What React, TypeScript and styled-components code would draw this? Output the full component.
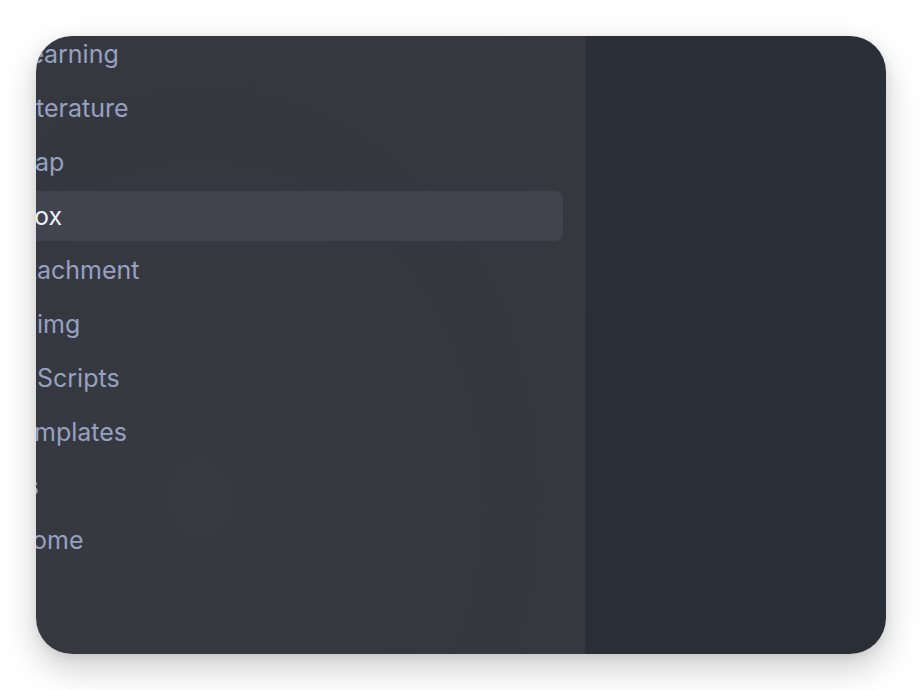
import React from "react";
import styled, { createGlobalStyle } from "styled-components";

const Global = createGlobalStyle`
  html, body { margin: 0; padding: 0; background: #ffffff; }
  body { font-family: Inter, "Noto Sans", sans-serif; }
`;

const Page = styled.div`
  width: 922px;
  height: 690px;
  padding: 36px;
  box-sizing: border-box;
  background: #ffffff;
`;

const Window = styled.div`
  width: 850px;
  height: 618px;
  border-radius: 36px;
  overflow: hidden;
  display: flex;
  box-shadow: 0 14px 34px rgba(0, 0, 0, 0.2), 0 2px 10px rgba(0, 0, 0, 0.08);
`;

const Sidebar = styled.aside`
  width: 527px;
  flex: none;
  background: radial-gradient(ellipse at 30% 75%, #383a42 0%, #35373f 55%, #36383f 100%);
  border-right: 1px solid #30323a;
  padding-right: 22px;
  box-sizing: content-box;
  overflow: hidden;
`;

const List = styled.ul`
  list-style: none;
  margin: -7px 0 0 -20px;
  padding: 0;
  display: flex;
  flex-direction: column;
  gap: 4px;
`;

const Row = styled.li<{ $active?: boolean }>`
  height: 50px;
  display: flex;
  align-items: center;
  padding-left: 21px;
  border-radius: 8px;
  background: ${(p) => (p.$active ? "#41444f" : "transparent")};
  color: ${(p) => (p.$active ? "#eef0f4" : "#96a1c2")};
  font-size: 25px;
  font-weight: 400;
  white-space: nowrap;
  letter-spacing: 0;
`;

const Label = styled.span<{ $offset: number }>`
  margin-left: ${(p) => p.$offset}px;
  display: inline-flex;
  align-items: center;
`;

const Hidden = styled.span`
  display: inline-block;
  width: 0;
  direction: rtl;
  white-space: nowrap;
`;

const Main = styled.main`
  flex: 1;
  background: #2a2e37;
`;

type Item = { pre: string; rest: string; offset: number; active?: boolean };

const items: Item[] = [
  { pre: "Le", rest: "arning", offset: 7 },
  { pre: "Li", rest: "terature", offset: -1 },
  { pre: "M", rest: "ap", offset: -2 },
  { pre: "Inb", rest: "ox", offset: -3, active: true },
  { pre: "Att", rest: "achment", offset: 0 },
  { pre: "", rest: "img", offset: 0 },
  { pre: "", rest: "Scripts", offset: 0 },
  { pre: "Te", rest: "mplates", offset: -3 },
  { pre: "Tags", rest: "", offset: 2 },
  { pre: "H", rest: "ome", offset: -5 },
];

export default function App() {
  return (
    <>
      <Global />
      <Page>
        <Window>
          <Sidebar>
            <List>
              {items.map((it, i) => (
                <Row key={i} $active={it.active}>
                  <Label $offset={it.offset}>
                    <Hidden>{it.pre}</Hidden>
                    {it.rest}
                  </Label>
                </Row>
              ))}
            </List>
          </Sidebar>
          <Main />
        </Window>
      </Page>
    </>
  );
}
